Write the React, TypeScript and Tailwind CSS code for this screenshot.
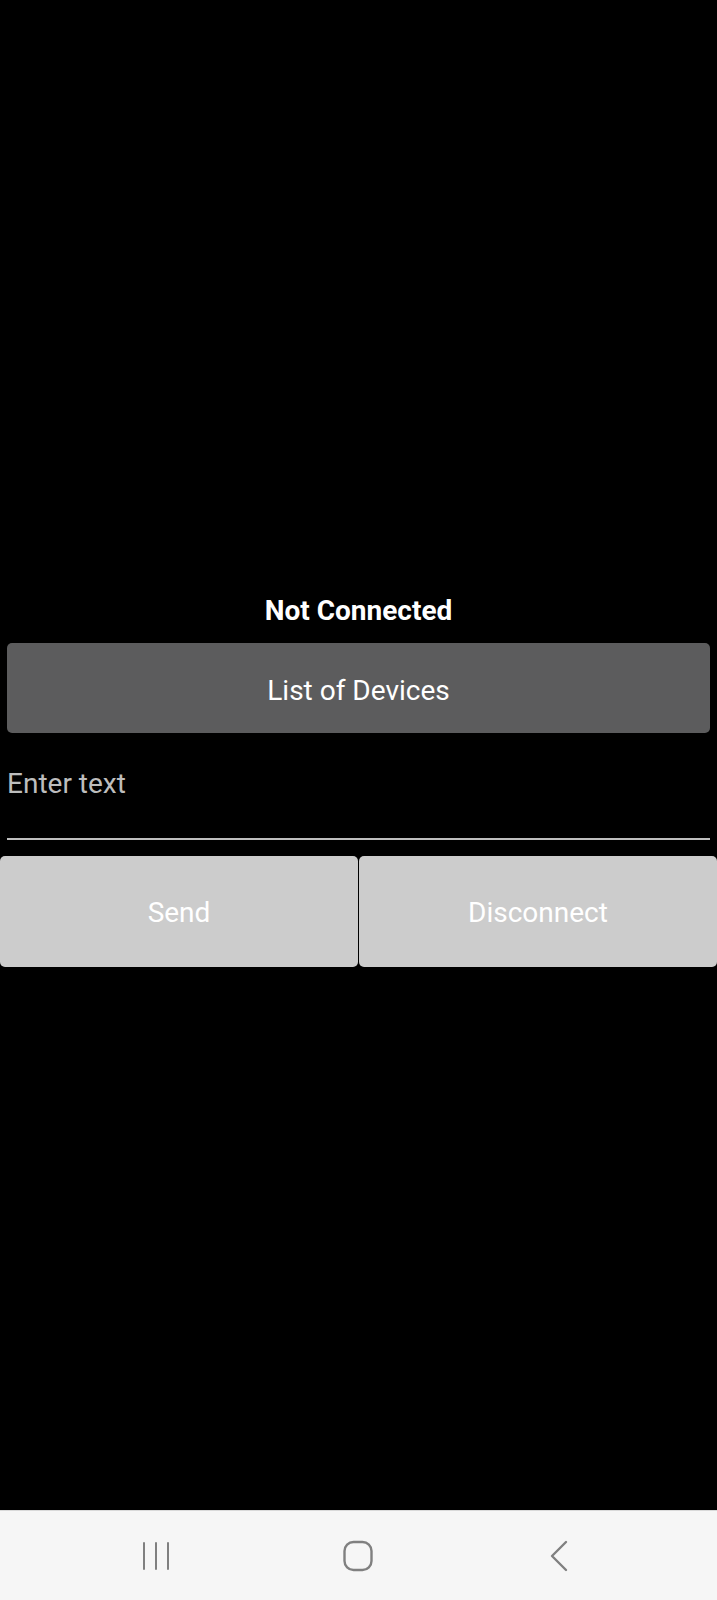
import React from 'react'

function NavBar() {
  return (
    <div className="flex h-[90px] items-center justify-center border-t border-[#d9d9d9] bg-[#f6f6f6]">
      {/* recent apps */}
      <div className="flex w-[200px] justify-center">
        <svg className="mr-[6px]" width="30" height="30" viewBox="0 0 30 30" fill="none" stroke="#808080" strokeWidth="2" strokeLinecap="round">
          <path d="M3 2v26M15 2v26M27 2v26" />
        </svg>
      </div>
      {/* home */}
      <div className="flex w-[200px] justify-center">
        <svg className="mr-[2px]" width="32" height="32" viewBox="0 0 32 32" fill="none" stroke="#808080" strokeWidth="2.4">
          <rect x="2.5" y="2" width="27" height="28" rx="9" />
        </svg>
      </div>
      {/* back */}
      <div className="flex w-[200px] justify-center">
        <svg width="20" height="32" viewBox="0 0 20 32" fill="none" stroke="#808080" strokeWidth="2.4" strokeLinecap="round" strokeLinejoin="round">
          <path d="M17 2 3 16l14 14" />
        </svg>
      </div>
    </div>
  )
}

export default function App() {
  return (
    <div className="flex h-[1600px] w-full flex-col bg-black font-['Roboto',sans-serif]">
      <div className="flex flex-1 flex-col pt-[594px]">
        <p className="h-[33px] text-center text-[28px] font-bold leading-[33px] text-white">Not Connected</p>

        <button className="mx-[7px] mt-[16px] h-[90px] rounded-[5px] bg-[#5c5c5d] pt-[6px] text-[28px] text-white">
          List of Devices
        </button>

        <input
          placeholder="Enter text"
          className="mx-[7px] mt-[34px] h-[73px] border-b-2 border-[#bfbfbf] bg-transparent pb-[38px] text-[28px] leading-[33px] text-white outline-none placeholder:text-[#bdbdbd]"
        />

        <div className="mt-[16px] grid h-[111px] grid-cols-2 gap-[1px]">
          <button className="rounded-[5px] bg-[#cccccc] pt-[2px] text-[28px] text-white">Send</button>
          <button className="rounded-[5px] bg-[#cccccc] pt-[2px] text-[28px] text-white">Disconnect</button>
        </div>
      </div>

      <NavBar />
    </div>
  )
}
